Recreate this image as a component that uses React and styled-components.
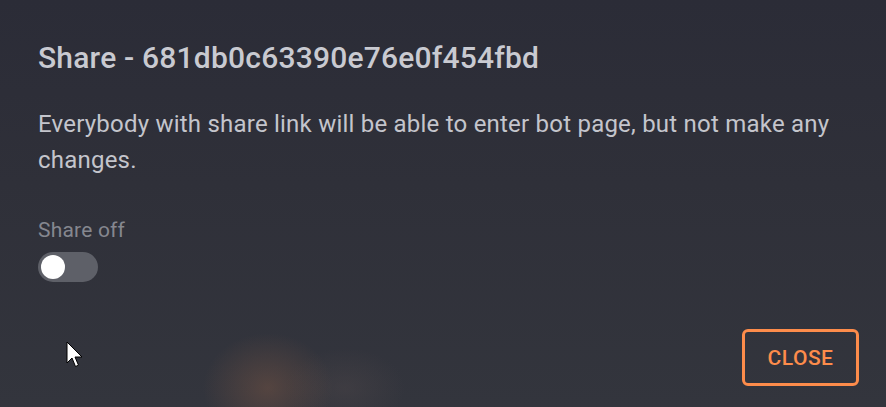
import React, { useState } from 'react';
import styled, { createGlobalStyle } from 'styled-components';

const GlobalStyle = createGlobalStyle`
  html, body {
    margin: 0;
    padding: 0;
    height: 100%;
    background: #2d2e38;
  }
  #root {
    height: 100%;
  }
`

const Backdrop = styled.div`
  position: relative;
  height: 407px;
  overflow: hidden;
  font-family: Roboto, "Liberation Sans", sans-serif;
  background:
    radial-gradient(ellipse 65px 55px at 268px 388px, rgba(118, 84, 68, 0.5), rgba(118, 84, 68, 0) 100%),
    radial-gradient(ellipse 60px 40px at 345px 388px, rgba(80, 72, 74, 0.4), rgba(80, 72, 74, 0) 100%),
    linear-gradient(180deg, #2b2c37 0%, #2f3039 45%, #33353d 100%);
`

const Dialog = styled.div`
  display: flex;
  flex-direction: column;
  height: 100%;
  box-sizing: border-box;
  padding: 40px 27px 21px 38px;
`

const Title = styled.h2`
  margin: 0;
  font-size: 30px;
  line-height: 36px;
  font-weight: 500;
  letter-spacing: 0.2px;
  color: #c9cad1;
`

const Text = styled.p`
  margin: 30px 0 0;
  font-size: 24px;
  line-height: 36px;
  font-weight: 400;
  letter-spacing: 0.22px;
  color: #c4c5cc;
  max-width: 810px;
`

const Field = styled.div`
  display: flex;
  flex-direction: column;
  align-items: flex-start;
  margin-top: 40px;
`

const Label = styled.span`
  font-size: 21px;
  line-height: 24px;
  letter-spacing: 0.2px;
  color: #85878f;
`

const Track = styled.button`
  position: relative;
  margin-top: 10px;
  width: 60px;
  height: 30px;
  padding: 0;
  border: none;
  border-radius: 15px;
  background: ${p => (p.$on ? '#ff8c4a' : '#5e6068')};
  cursor: pointer;
`

const Knob = styled.span`
  position: absolute;
  top: 3px;
  left: ${p => (p.$on ? '33px' : '3px')};
  width: 24px;
  height: 24px;
  border-radius: 50%;
  background: #ffffff;
  transition: left 150ms;
`

const Actions = styled.div`
  display: flex;
  justify-content: flex-end;
  margin-top: auto;
`

const CloseButton = styled.button`
  width: 117px;
  height: 57px;
  border: 3px solid #fd8c4b;
  border-radius: 6px;
  background: transparent;
  color: #fd8c4b;
  font-family: Roboto, "Liberation Sans", sans-serif;
  font-size: 21px;
  font-weight: 500;
  letter-spacing: 0.5px;
  text-transform: uppercase;
  cursor: pointer;
`

const Cursor = styled.svg`
  position: absolute;
  left: 66px;
  top: 341px;
`

const App = () => {
  const [on, setOn] = useState(false);
  return (
    <>
      <GlobalStyle />
      <Backdrop>
        <Dialog>
          <Title>Share - 681db0c63390e76e0f454fbd</Title>
          <Text>
            Everybody with share link will be able to enter bot page, but not make any changes.
          </Text>
          <Field>
            <Label>{on ? 'Share on' : 'Share off'}</Label>
            <Track $on={on} onClick={() => setOn(!on)}>
              <Knob $on={on} />
            </Track>
          </Field>
          <Actions>
            <CloseButton>Close</CloseButton>
          </Actions>
        </Dialog>
        <Cursor width="19" height="28" viewBox="0 0 19 28">
          <path d="M1 1 L1 22 L6 17 L9.5 25.5 L12.5 24.2 L9 16 L16 16 Z" fill="#ffffff" stroke="#000000" strokeWidth="1" strokeLinejoin="miter" />
        </Cursor>
      </Backdrop>
    </>
  );
};

export default App;
